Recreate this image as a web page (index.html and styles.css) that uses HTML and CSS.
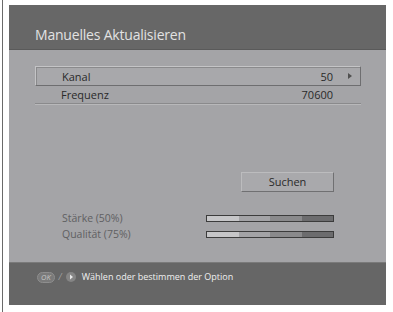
FILE: index.html
```html
<!DOCTYPE html>
<html>
<head>
<meta charset="utf-8">
<link rel="stylesheet" href="styles.css">
</head>
<body>
<div class="outer">
  <div class="screen">
    <div class="header"><span class="title">Manuelles Aktualisieren</span></div>
    <div class="content">
      <div class="row row-selected">
        <span class="label">Kanal</span>
        <span class="value">50</span>
        <span class="arrow"></span>
      </div>
      <div class="row row-plain">
        <span class="label">Frequenz</span>
        <span class="value">70600</span>
        <span class="arrow-space"></span>
      </div>
      <div class="btn-wrap"><div class="btn">Suchen</div></div>
      <div class="meters">
        <div class="meter">
          <span class="mlabel">Stärke (50%)</span>
          <div class="bar"><i class="s1"></i><i class="s2"></i><i class="s3"></i><i class="s4"></i></div>
        </div>
        <div class="meter">
          <span class="mlabel">Qualität (75%)</span>
          <div class="bar"><i class="s1"></i><i class="s2"></i><i class="s3"></i><i class="s4"></i></div>
        </div>
      </div>
    </div>
    <div class="footer">
      <span class="ok">OK</span>
      <span class="slash">/</span>
      <span class="play"><svg width="10" height="10" viewBox="0 0 10 10"><circle cx="5" cy="5" r="5" fill="#858585"/><path d="M4 2.6 L7 5 L4 7.4 Z" fill="#e8e8e8"/></svg></span>
      <span class="hint">Wählen oder bestimmen der Option</span>
    </div>
  </div>
</div>
</body>
</html>
```
FILE: styles.css
```css
html, body {
  margin: 0;
  padding: 0;
  background: #ffffff;
}
body {
  width: 393px;
  height: 312px;
  overflow: hidden;
  font-family: "Open Sans", "DejaVu Sans", sans-serif;
}
.outer {
  margin-left: 2px;
  border-left: 1px solid #6a6a6a;
  padding: 5px 0 7px 6px;
  height: 300px;
}
.screen {
  width: 377px;
  height: 300px;
  display: flex;
  flex-direction: column;
  background: #a4a4a7;
}
.header {
  height: 45px;
  background: #676767;
  border-bottom: 1px solid #5a5a5a;
  box-sizing: border-box;
  display: flex;
  align-items: flex-end;
  padding: 0 0 5px 26px;
}
.title {
  color: #e2e2e2;
  font-size: 14px;
  letter-spacing: -0.2px;
  line-height: 18px;
}
.content {
  flex: 1;
  padding: 16px 25px 0 26px;
  display: flex;
  flex-direction: column;
}
.row {
  display: flex;
  align-items: center;
  font-size: 11px;
  color: #2a2a2a;
  box-sizing: border-box;
}
.row-selected {
  height: 20px;
  border: 1px solid;
  border-color: #c4c4c6 #6e6e70 #6e6e70 #c4c4c6;
  background: #a8a8ab;
  box-shadow: inset 1px 1px 0 #8a8a8c;
}
.row-plain {
  height: 18px;
  border-bottom: 1px solid #8a8a8c;
  box-shadow: 0 1px 0 #b8b8ba;
}
.label {
  flex: 1;
  padding-left: 26px;
}
.value {
  text-align: right;
}
.arrow {
  width: 0;
  height: 0;
  border-left: 4px solid #505050;
  border-top: 3.5px solid transparent;
  border-bottom: 3.5px solid transparent;
  margin: 0 8px 0 15px;
}
.row-plain .arrow-space {
  width: 28px;
}
.btn-wrap {
  display: flex;
  justify-content: flex-end;
  margin-top: 68px;
  padding-right: 27px;
}
.btn {
  width: 93px;
  height: 20px;
  box-sizing: border-box;
  border: 1px solid;
  border-color: #bcbcbe #707072 #707072 #bcbcbe;
  background: #a9a9ac;
  font-size: 11px;
  line-height: 18px;
  text-align: center;
  color: #2a2a2a;
}
.meters {
  margin-top: 19px;
  display: flex;
  flex-direction: column;
  gap: 2px;
}
.meter {
  display: flex;
  align-items: center;
  height: 14px;
}
.mlabel {
  flex: 1;
  padding-left: 27px;
  font-size: 10.5px;
  color: #606062;
}
.bar {
  width: 128px;
  height: 7px;
  box-sizing: border-box;
  border: 1px solid #3c3c3c;
  display: flex;
  margin-right: 27px;
}
.bar i {
  flex: 1;
  display: block;
}
.s1 { background: #c6c6c8; }
.s2 { background: #a3a3a6; }
.s3 { background: #8a8a8c; }
.s4 { background: #6c6c6e; }
.footer {
  height: 43px;
  background: #666666;
  border-top: 1px solid #7a7a7a;
  box-sizing: border-box;
  display: flex;
  align-items: flex-start;
  padding: 8px 0 0 28px;
  color: #eeeeee;
  font-size: 9px;
  line-height: 12px;
}
.ok {
  display: inline-block;
  background: #7a7a7a;
  border: 1px solid #8e8e8e;
  color: #c4c4c4;
  border-radius: 6px;
  font-size: 7.5px;
  font-style: italic;
  line-height: 9px;
  padding: 0 3px;
  margin-top: 1px;
}
.slash {
  margin: 0 4px;
  color: #a0a0a0;
  font-style: italic;
}
.play {
  display: inline-flex;
  margin-top: 1px;
  margin-right: 6px;
}
.hint {
  color: #f0f0f0;
}
```
